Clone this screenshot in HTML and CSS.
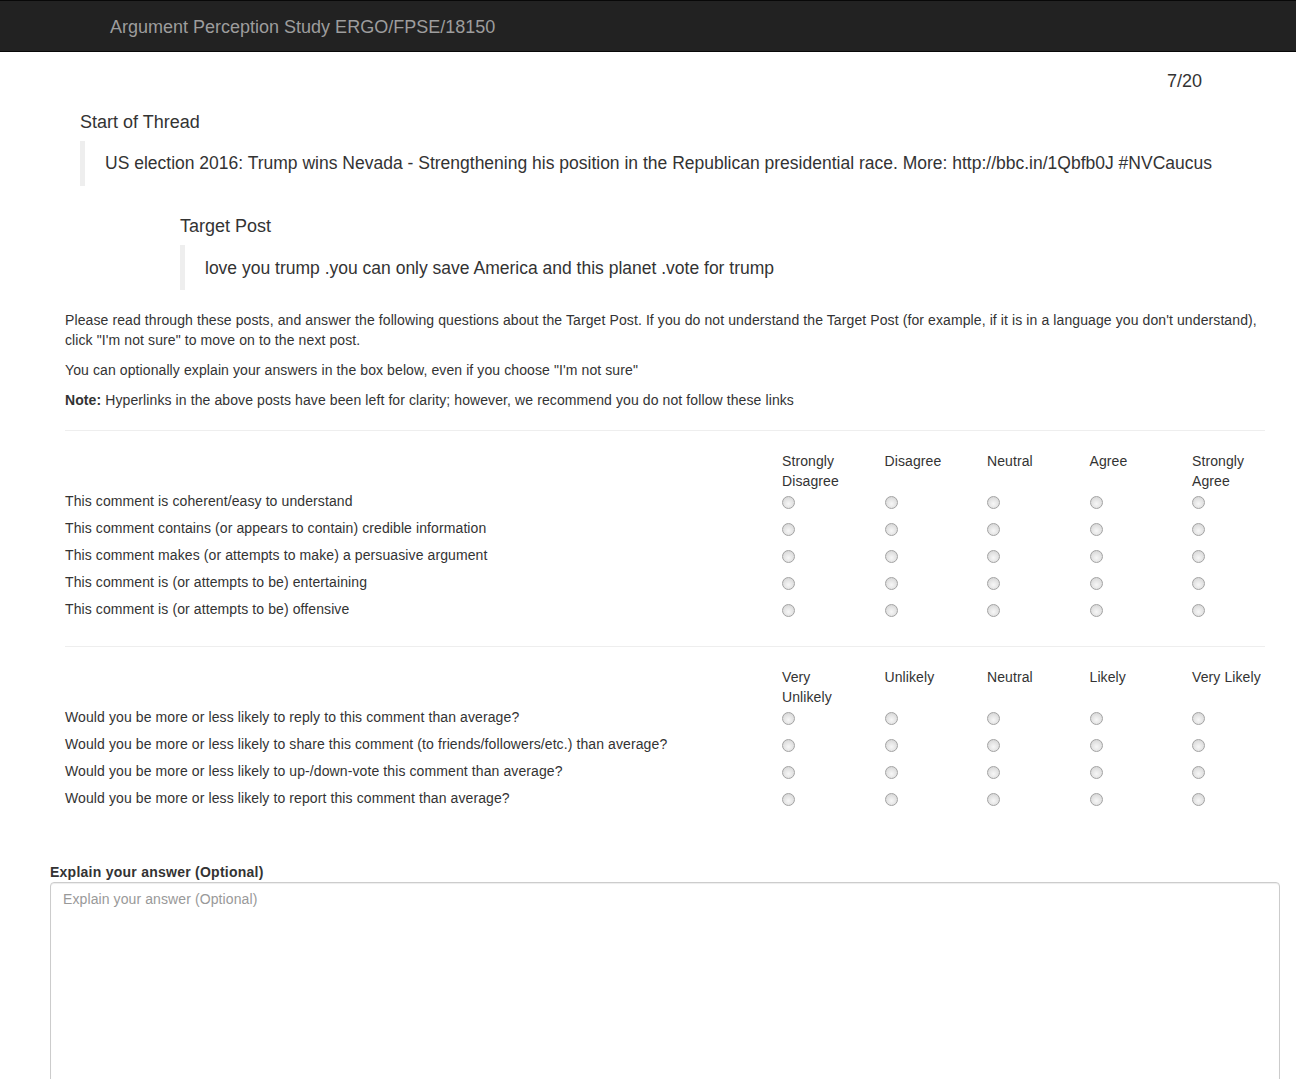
FILE: index.html
```html
<!DOCTYPE html>
<html lang="en">
<head>
<meta charset="utf-8">
<title>Argument Perception Study</title>
<link rel="stylesheet" href="styles.css">
</head>
<body>
<nav class="navbar">
  <span class="brand">Argument Perception Study ERGO/FPSE/18150</span>
</nav>
<main class="page">
  <div class="progress">7/20</div>
  <section class="thread">
    <h4 class="post-title">Start of Thread</h4>
    <blockquote class="post">US election 2016: Trump wins Nevada - Strengthening his position in the Republican presidential race. More: http://bbc.in/1Qbfb0J #NVCaucus</blockquote>
    <div class="target">
      <h4 class="post-title">Target Post</h4>
      <blockquote class="post">love you trump .you can only save America and this planet .vote for trump</blockquote>
    </div>
  </section>
  <section class="content">
    <p>Please read through these posts, and answer the following questions about the Target Post. If you do not understand the Target Post (for example, if it is in a language you don't understand), click "I'm not sure" to move on to the next post.</p>
    <p>You can optionally explain your answers in the box below, even if you choose "I'm not sure"</p>
    <p><strong>Note:</strong> Hyperlinks in the above posts have been left for clarity; however, we recommend you do not follow these links</p>
    <hr>
    <div class="scale">
      <div class="head"></div>
      <div class="head">Strongly<br>Disagree</div>
      <div class="head">Disagree</div>
      <div class="head">Neutral</div>
      <div class="head">Agree</div>
      <div class="head">Strongly<br>Agree</div>

      <div class="q">This comment is coherent/easy to understand</div>
      <div class="cell"><input type="radio" name="a1"></div><div class="cell"><input type="radio" name="a1"></div><div class="cell"><input type="radio" name="a1"></div><div class="cell"><input type="radio" name="a1"></div><div class="cell"><input type="radio" name="a1"></div>

      <div class="q">This comment contains (or appears to contain) credible information</div>
      <div class="cell"><input type="radio" name="a2"></div><div class="cell"><input type="radio" name="a2"></div><div class="cell"><input type="radio" name="a2"></div><div class="cell"><input type="radio" name="a2"></div><div class="cell"><input type="radio" name="a2"></div>

      <div class="q">This comment makes (or attempts to make) a persuasive argument</div>
      <div class="cell"><input type="radio" name="a3"></div><div class="cell"><input type="radio" name="a3"></div><div class="cell"><input type="radio" name="a3"></div><div class="cell"><input type="radio" name="a3"></div><div class="cell"><input type="radio" name="a3"></div>

      <div class="q">This comment is (or attempts to be) entertaining</div>
      <div class="cell"><input type="radio" name="a4"></div><div class="cell"><input type="radio" name="a4"></div><div class="cell"><input type="radio" name="a4"></div><div class="cell"><input type="radio" name="a4"></div><div class="cell"><input type="radio" name="a4"></div>

      <div class="q">This comment is (or attempts to be) offensive</div>
      <div class="cell"><input type="radio" name="a5"></div><div class="cell"><input type="radio" name="a5"></div><div class="cell"><input type="radio" name="a5"></div><div class="cell"><input type="radio" name="a5"></div><div class="cell"><input type="radio" name="a5"></div>
    </div>
    <hr>
    <div class="scale">
      <div class="head"></div>
      <div class="head">Very<br>Unlikely</div>
      <div class="head">Unlikely</div>
      <div class="head">Neutral</div>
      <div class="head">Likely</div>
      <div class="head">Very Likely</div>

      <div class="q">Would you be more or less likely to reply to this comment than average?</div>
      <div class="cell"><input type="radio" name="b1"></div><div class="cell"><input type="radio" name="b1"></div><div class="cell"><input type="radio" name="b1"></div><div class="cell"><input type="radio" name="b1"></div><div class="cell"><input type="radio" name="b1"></div>

      <div class="q">Would you be more or less likely to share this comment (to friends/followers/etc.) than average?</div>
      <div class="cell"><input type="radio" name="b2"></div><div class="cell"><input type="radio" name="b2"></div><div class="cell"><input type="radio" name="b2"></div><div class="cell"><input type="radio" name="b2"></div><div class="cell"><input type="radio" name="b2"></div>

      <div class="q">Would you be more or less likely to up-/down-vote this comment than average?</div>
      <div class="cell"><input type="radio" name="b3"></div><div class="cell"><input type="radio" name="b3"></div><div class="cell"><input type="radio" name="b3"></div><div class="cell"><input type="radio" name="b3"></div><div class="cell"><input type="radio" name="b3"></div>

      <div class="q">Would you be more or less likely to report this comment than average?</div>
      <div class="cell"><input type="radio" name="b4"></div><div class="cell"><input type="radio" name="b4"></div><div class="cell"><input type="radio" name="b4"></div><div class="cell"><input type="radio" name="b4"></div><div class="cell"><input type="radio" name="b4"></div>
    </div>
  </section>
  <section class="explain">
    <label class="explain-label" for="explain">Explain your answer (Optional)</label>
    <textarea id="explain" class="explain-box" placeholder="Explain your answer (Optional)"></textarea>
  </section>
</main>
</body>
</html>
```

FILE: styles.css
```css
* { box-sizing: border-box; }

html, body {
  margin: 0;
  padding: 0;
  background: #fff;
}

body {
  font-family: "Liberation Sans", Arial, Helvetica, sans-serif;
  font-size: 14px;
  line-height: 20px;
  color: #333;
}

.navbar {
  height: 52px;
  background: #222;
  border-top: 1px solid #080808;
  border-bottom: 1px solid #080808;
  padding: 16px 0 0 110px;
}

.brand {
  display: block;
  font-size: 18px;
  line-height: 20px;
  color: #9d9d9d;
}

.page {
  display: flex;
  flex-direction: column;
}

.progress {
  font-size: 18px;
  line-height: 20px;
  text-align: right;
  padding-right: 94px;
  margin-top: 19px;
}

.thread {
  padding-left: 80px;
  margin-top: 21px;
}

.post-title {
  margin: 0;
  font-size: 18px;
  font-weight: normal;
  line-height: 20px;
}

.post {
  margin: 9px 0 0;
  padding: 10px 20px;
  border-left: 5px solid #eee;
  font-size: 17.5px;
  line-height: 25px;
}

.target {
  padding-left: 100px;
  margin-top: 30px;
}

.target .post { margin-top: 9px; padding-top: 11px; padding-bottom: 9px; }

.content {
  margin: 20px 31px 0 65px;
  letter-spacing: 0.1px;
}

.content p {
  margin: 0 0 10px;
}

hr {
  margin: 20px 0;
  border: 0;
  border-top: 1px solid #eee;
  height: 0;
}

.scale {
  display: grid;
  grid-template-columns: 717px repeat(4, 102.5px) 1fr;
  grid-auto-rows: auto;
}

.head {
  line-height: 20px;
  min-height: 40px;
}

.q, .cell {
  height: 27px;
  line-height: 20px;
}

.cell input[type="radio"] {
  -webkit-appearance: none;
  appearance: none;
  display: block;
  width: 13px;
  height: 13px;
  margin: 5px 0 0;
  border: 1px solid #a3a3a3;
  border-radius: 50%;
  background: radial-gradient(circle at 50% 62%, #f7f7f7 0, #e6e6e6 45%, #cfcfcf 100%);
}

.explain {
  display: flex;
  flex-direction: column;
  margin: 47px 16px 0 50px;
  letter-spacing: 0.1px;
}

.explain-label {
  font-weight: bold;
  line-height: 20px;
  letter-spacing: 0.25px;
}

.explain-box {
  height: 240px;
  padding: 6px 12px;
  border: 1px solid #ccc;
  border-radius: 4px;
  font-family: "Liberation Sans", Arial, Helvetica, sans-serif;
  font-size: 14px;
  line-height: 20px;
  letter-spacing: 0.1px;
  color: #555;
  resize: vertical;
  box-shadow: inset 0 1px 1px rgba(0,0,0,0.075);
}

.explain-box::placeholder {
  color: #999;
}
```
